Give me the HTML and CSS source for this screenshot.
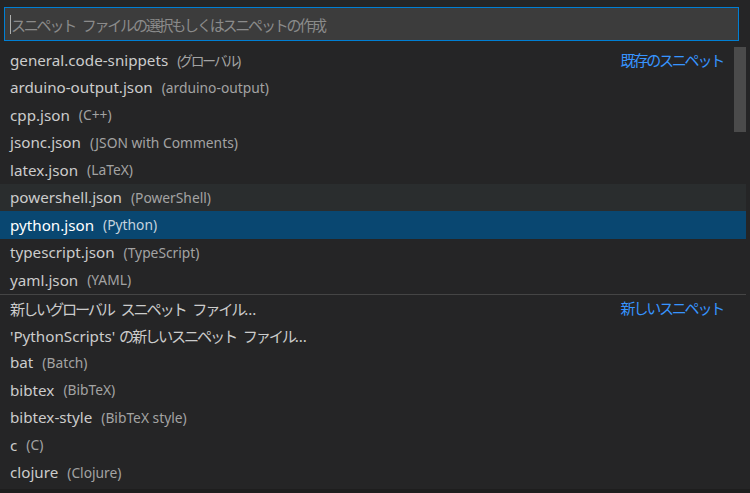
FILE: index.html
```html
<!DOCTYPE html>
<html lang="ja">
<head>
    <meta charset="UTF-8">
    <title>Quick Pick</title>
    <link rel="stylesheet" href="styles.css">
</head>
<body>
    <div class="quick-input">
        <div class="input-box">
            <span class="caret"></span>
            <span class="placeholder ja">スニペット ファイルの選択もしくはスニペットの作成</span>
        </div>

        <div class="list">
            <div class="row"><span class="label">general.code-snippets</span><span class="desc ja">(グローバル)</span><span class="group ja">既存のスニペット</span></div>
            <div class="row"><span class="label">arduino-output.json</span><span class="desc">(arduino-output)</span></div>
            <div class="row"><span class="label">cpp.json</span><span class="desc">(C++)</span></div>
            <div class="row"><span class="label">jsonc.json</span><span class="desc">(JSON with Comments)</span></div>
            <div class="row"><span class="label">latex.json</span><span class="desc">(LaTeX)</span></div>
            <div class="row hover"><span class="label">powershell.json</span><span class="desc">(PowerShell)</span></div>
            <div class="row selected"><span class="label">python.json</span><span class="desc">(Python)</span></div>
            <div class="row"><span class="label">typescript.json</span><span class="desc">(TypeScript)</span></div>
            <div class="row"><span class="label">yaml.json</span><span class="desc">(YAML)</span></div>
            <div class="row separator"><span class="label"><span class="ja">新しいグローバル スニペット ファイル</span>...</span><span class="group ja">新しいスニペット</span></div>
            <div class="row"><span class="label">'PythonScripts' <span class="ja">の新しいスニペット ファイル</span>...</span></div>
            <div class="row"><span class="label">bat</span><span class="desc">(Batch)</span></div>
            <div class="row"><span class="label">bibtex</span><span class="desc">(BibTeX)</span></div>
            <div class="row"><span class="label">bibtex-style</span><span class="desc">(BibTeX style)</span></div>
            <div class="row"><span class="label">c</span><span class="desc">(C)</span></div>
            <div class="row"><span class="label">clojure</span><span class="desc">(Clojure)</span></div>

            <div class="scrollbar"></div>
        </div>
    </div>
</body>
</html>
```

FILE: styles.css
```css
body {
    margin: 0;
    padding: 0;
    background: #1e1e1e;
    font-family: 'Noto Sans', 'Noto Sans CJK JP', sans-serif;
    color: #cccccc;
    overflow: hidden;
}

.quick-input {
    width: 750px;
    height: 489px;
    background: #252526;
    overflow: hidden;
}

.input-box {
    margin: 7px 11px 0 4px;
    height: 32px;
    background: #3c3c3c;
    border: 1px solid #007fd4;
    display: flex;
    align-items: center;
    padding-left: 5px;
}

.caret {
    width: 1px;
    height: 19px;
    background: #aeafad;
}

.placeholder {
    font-size: 15px;
    color: #8b8b8b;
}

/* Japanese glyphs run narrower in the original UI font */
.ja {
    letter-spacing: -2.2px;
    word-spacing: 5px;
}

.list {
    position: relative;
    width: 746px;
    margin-top: 5px;
}

.row {
    height: 27.5px;
    display: flex;
    align-items: center;
    padding-left: 10px;
    padding-right: 23px;
    font-size: 15.2px;
    white-space: nowrap;
}

.row.hover {
    background: #2a2d2e;
}

.row.selected {
    background: #094771;
    color: #ffffff;
}

.row.selected .desc {
    color: #c6d3de;
}

.row.separator {
    border-top: 1px solid #454545;
    height: 26.5px;
}

.desc {
    margin-left: 9px;
    font-size: 13.8px;
    color: #a3a3a3;
}

.group {
    margin-left: auto;
    color: #3794ff;
    font-size: 15px;
}

.scrollbar {
    position: absolute;
    top: 1px;
    right: 0;
    width: 12px;
    height: 85px;
    background: #4b4b4b;
}
```
